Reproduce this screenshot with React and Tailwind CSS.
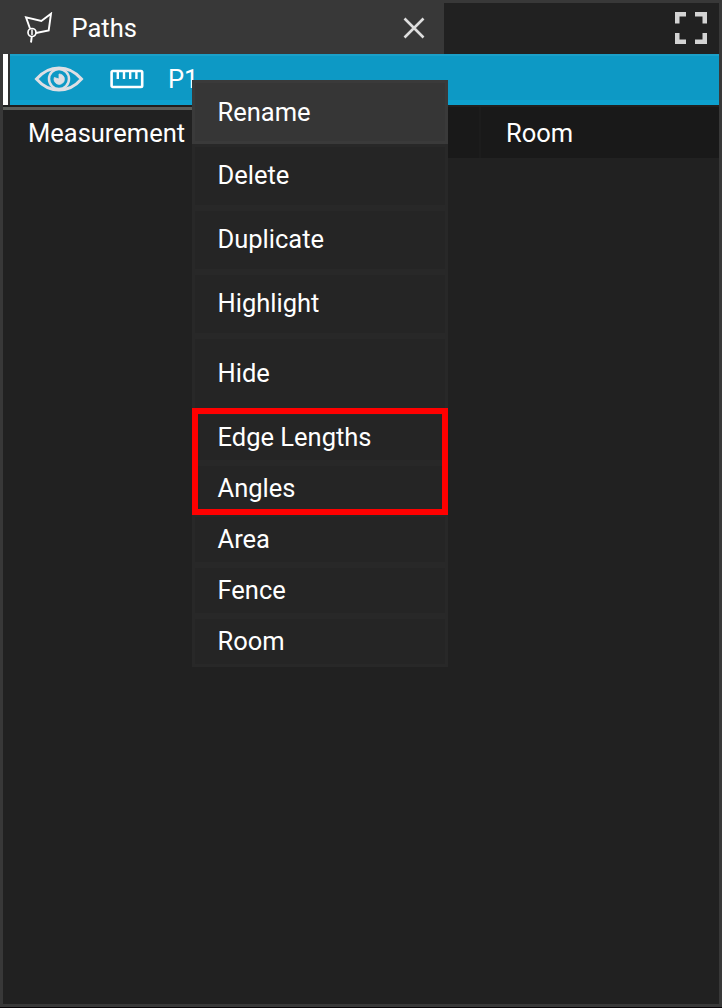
const items = [
  { label: 'Rename', row: 'h-16 bg-[#363636] border-[#3a3a3a]' },
  { label: 'Delete', row: 'h-16 pb-0.5 bg-[#252525] border-[#282828]' },
  { label: 'Duplicate', row: 'h-16 pb-0.5 bg-[#252525] border-[#282828]' },
  { label: 'Highlight', row: 'h-16 pb-0.5 bg-[#252525] border-[#282828]' },
  { label: 'Hide', row: 'h-[76px] pb-0.5 bg-[#252525] border-[#282828]' },
  { label: 'Edge Lengths', row: 'h-[51px] pb-0.5 bg-[#252525] border-[#282828]' },
  { label: 'Angles', row: 'h-[51px] pb-0.5 bg-[#252525] border-[#282828]' },
  { label: 'Area', row: 'h-[51px] pb-0.5 bg-[#252525] border-[#282828]' },
  { label: 'Fence', row: 'h-[51px] pb-0.5 bg-[#252525] border-[#282828]' },
  { label: 'Room', row: 'h-[51px] pb-0.5 bg-[#252525] border-[#282828]' },
];

function PathIcon() {
  return (
    <svg className="ml-[21px] h-8 w-8 shrink-0" viewBox="0 0 32 32" fill="none" stroke="#fff" strokeWidth="1.9">
      <path d="M6 16.500 2 5.300 17.300 9 27 1.700 24.700 18.500 12 21M7.800 24.500 7 30.500" />
      <path d="M8 17.500v5.500" strokeWidth="1.500" />
      <circle cx="8" cy="20.500" r="4" strokeWidth="1.700" />
    </svg>
  );
}

function EyeIcon() {
  return (
    <svg className="ml-[23.500px] h-[26px] w-[50px] shrink-0" viewBox="0 0 50 26" fill="none" stroke="#dedfe4">
      <path d="M2.500 13C9 5.500 16.500 2 25 2s16 3.500 22.500 11C41 20.500 33.500 24 25 24S9 20.500 2.500 13Z" strokeWidth="3" />
      <circle cx="25" cy="13" r="10" strokeWidth="2.500" />
      <path d="M25 8v5l-4.700-1.500a5.200 5.200 0 1 0 4.700-3.500Z" fill="#dedfe4" strokeWidth="0.800" />
    </svg>
  );
}

function RulerIcon() {
  return (
    <svg className="ml-[26px] h-5 w-[34px] shrink-0" viewBox="0 0 34 20" fill="none" stroke="#fff" strokeWidth="2.6">
      <rect x="1.600" y="2" width="30.600" height="16" rx="1.200" />
      <path d="M7.800 2v8M14 2v8M20.200 2v8M26.400 2v8" strokeWidth="2.400" />
    </svg>
  );
}

function ExpandIcon() {
  return (
    <svg className="mr-3 mt-[9px] h-8 w-8" viewBox="0 0 32 32" fill="none" stroke="#d3d3d3" strokeWidth="4.500">
      <path d="M11 2.250H2.250V11.500M20 2.250h9.750V11.500M2.250 21v8.750H11M29.750 21v8.750H20" />
    </svg>
  );
}

function ContextMenu() {
  return (
    <div className="absolute left-[192px] top-[80px] flex w-64 flex-col">
      {items.map(({ label, row }) => (
        <button key={label} className={`flex shrink-0 items-center border-[3px] pl-[22.500px] text-left ${row}`}>
          {label}
        </button>
      ))}
      <div className="pointer-events-none absolute inset-x-0 top-[328px] h-[107px] border-[6px] border-[#ff0000]" />
    </div>
  );
}

export default function App() {
  return (
    <div className="relative h-[1008px] w-[722px] overflow-hidden bg-[#080508] font-['Roboto',sans-serif] text-[25.500px] leading-[30px] text-white">
      <div className="flex h-[1007px] flex-col border-[3px] border-[#383838] bg-[#212121]">
        <header className="flex h-[51px] shrink-0 justify-between">
          <div className="flex w-[441px] items-center bg-[#383838] pb-[1.500px]">
            <PathIcon />
            <span className="ml-[15.500px]">Paths</span>
            <svg className="ml-auto mr-[19.500px] h-[22px] w-[22px]" viewBox="0 0 22 22" stroke="#dedede" strokeWidth="2.600">
              <path d="m1.500 1.500 19 19m0-19-19 19" />
            </svg>
          </div>
          <ExpandIcon />
        </header>
        <div className="flex h-[51px] shrink-0">
          <div className="w-[5px] bg-white" />
          <div className="w-0.5 bg-[#303030]" />
          <div className="flex grow items-center border-b-[5px] border-t-2 border-b-[#0da1cf] border-t-[#1ba0c9] bg-[#0d99c5] pt-[1.500px]">
            <EyeIcon />
            <RulerIcon />
            <span className="ml-[24.500px]">P1</span>
          </div>
        </div>
        <div className="flex h-[53px] shrink-0">
          <div className="w-[189px] border-t-2 border-[#202020]">
            <div className="h-[3px] bg-[#5c5e5a]" />
            <div className="pl-[25px] pt-[8px]">Measurement</div>
          </div>
          <div className="flex grow border-t-2 border-[#202020] bg-[#191919]">
            <div className="w-[289px] border-r-2 border-[#1c1c1c]" />
            <span className="pl-[25px] pt-[11px]">Room</span>
          </div>
        </div>
      </div>
      <ContextMenu />
    </div>
  );
}
